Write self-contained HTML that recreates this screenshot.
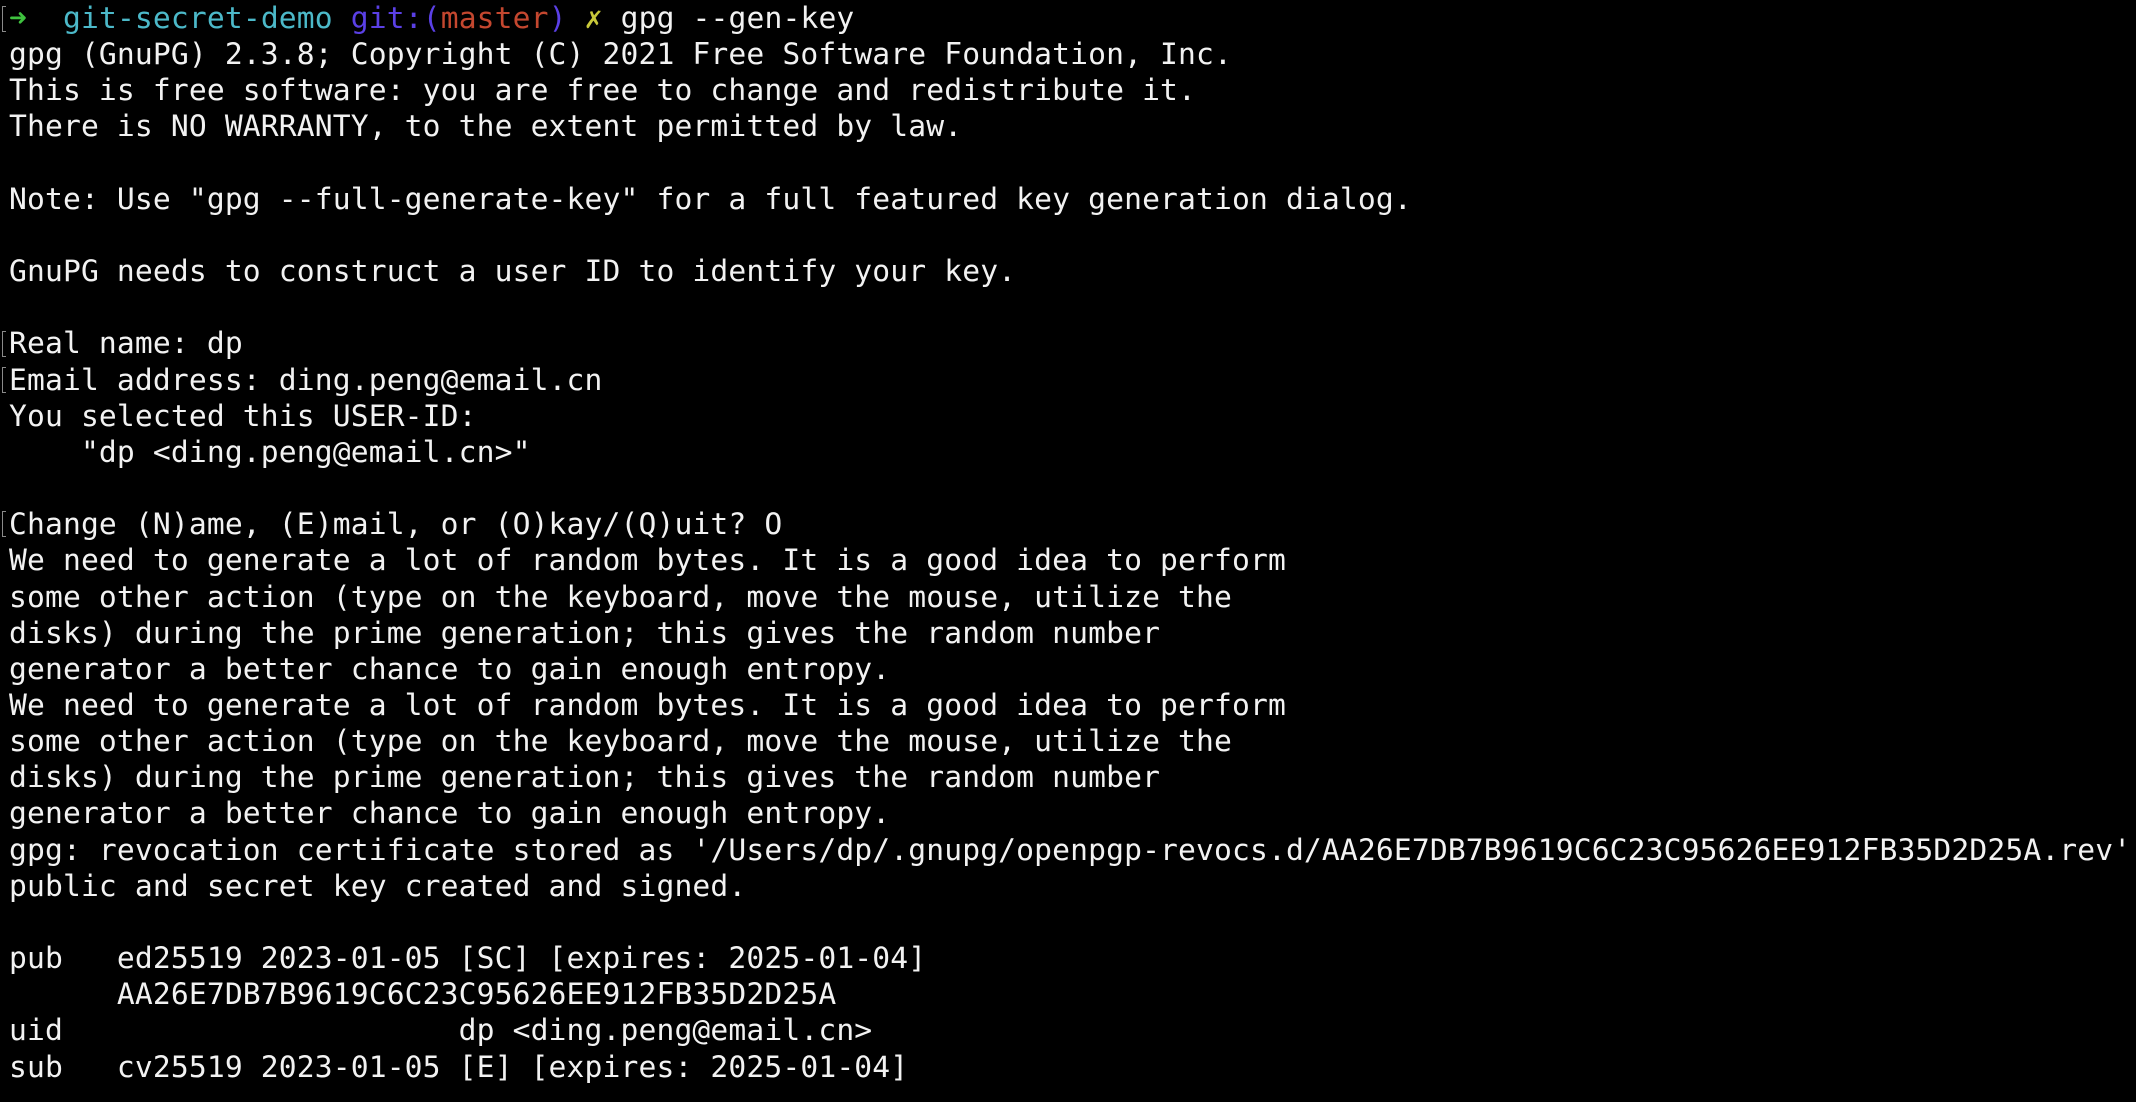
<!DOCTYPE html>
<html><head><meta charset="utf-8"><style>
html,body{margin:0;padding:0;background:#000;width:2136px;height:1102px;overflow:hidden}
pre{margin:0;position:absolute;left:9px;top:0;font-family:"DejaVu Sans Mono","Liberation Mono",monospace;font-size:29.65px;letter-spacing:0.14px;line-height:36.15px;color:#f2f2f2;white-space:pre}
.br{position:absolute;left:2px;width:3px;height:24px;border:1.5px solid #8a8a8a;border-right:none}
.g{color:#3fc23f}.c{color:#4cb9c9}.b{color:#5b40e6}.r{color:#c4472f}.y{color:#c9c93a}
</style></head><body>
<div class="br" style="top:6px"></div>
<div class="br" style="top:331px"></div>
<div class="br" style="top:367px"></div>
<div class="br" style="top:511px"></div>
<pre><span class="g">➜</span>  <span class="c">git-secret-demo</span> <span class="b">git:(</span><span class="r">master</span><span class="b">)</span> <span class="y">✗</span> gpg --gen-key
gpg (GnuPG) 2.3.8; Copyright (C) 2021 Free Software Foundation, Inc.
This is free software: you are free to change and redistribute it.
There is NO WARRANTY, to the extent permitted by law.

Note: Use "gpg --full-generate-key" for a full featured key generation dialog.

GnuPG needs to construct a user ID to identify your key.

Real name: dp
Email address: ding.peng@email.cn
You selected this USER-ID:
    "dp &lt;ding.peng@email.cn&gt;"

Change (N)ame, (E)mail, or (O)kay/(Q)uit? O
We need to generate a lot of random bytes. It is a good idea to perform
some other action (type on the keyboard, move the mouse, utilize the
disks) during the prime generation; this gives the random number
generator a better chance to gain enough entropy.
We need to generate a lot of random bytes. It is a good idea to perform
some other action (type on the keyboard, move the mouse, utilize the
disks) during the prime generation; this gives the random number
generator a better chance to gain enough entropy.
gpg: revocation certificate stored as '/Users/dp/.gnupg/openpgp-revocs.d/AA26E7DB7B9619C6C23C95626EE912FB35D2D25A.rev'
public and secret key created and signed.

pub   ed25519 2023-01-05 [SC] [expires: 2025-01-04]
      AA26E7DB7B9619C6C23C95626EE912FB35D2D25A
uid                      dp &lt;ding.peng@email.cn&gt;
sub   cv25519 2023-01-05 [E] [expires: 2025-01-04]</pre>
</body></html>
